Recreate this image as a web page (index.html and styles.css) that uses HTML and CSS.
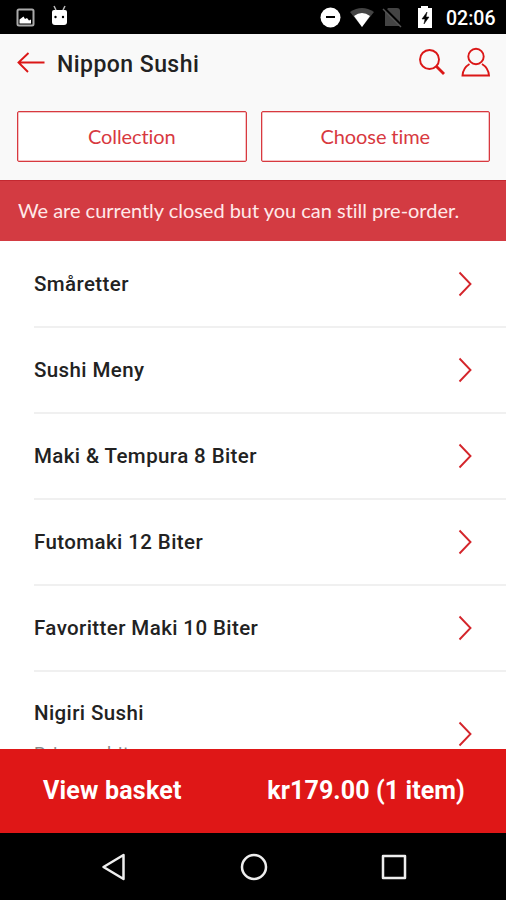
FILE: index.html
```html
<!DOCTYPE html>
<html lang="en">
<head>
<meta charset="utf-8">
<title>Nippon Sushi</title>
<link rel="stylesheet" href="styles.css">
</head>
<body>
<div class="status">
  <svg width="80" height="34" viewBox="0 0 80 34">
    <rect x="17.500" y="9.500" width="16" height="16" rx="1.500" fill="none" stroke="#aaa" stroke-width="2"/>
    <path d="M19.500 23.500v-4l2-1.500 2-1.500 1.500 2.500 2-1 2 2.500 2-1v4z" fill="#fff"/>
    <path d="M52 12q0-2 2-2h11q2 0 2 2v10q0 3-3 3h-9q-3 0-3-3z" fill="#fff"/>
    <path d="M54 6l2 4M65 6l-2 4" stroke="#bbb" stroke-width="1.500"/>
    <circle cx="55.500" cy="17" r="1.200"/><circle cx="63" cy="17" r="1.200"/>
  </svg>
  <svg class="status-right" width="116" height="34" viewBox="318 0 116 34">
    <circle cx="330.500" cy="17.500" r="10" fill="#fff"/>
    <path d="M326 17h9" stroke="#000" stroke-width="2"/>
    <path d="M350 12q12-8 24 0L362 27z" fill="#444"/>
    <path d="M354 16q8-6 16 0L362 27z" fill="#fff"/>
    <path d="M388 8h9q3 0 3 3v15h-15V12z" fill="#444"/>
    <path d="M384 8l18 18" stroke="#000" stroke-width="2.500"/>
    <path d="M383 9l18 18" stroke="#555" stroke-width="1.500"/>
    <path d="M418 8h3V6h7v2h4v20h-14z" fill="#fff"/>
    <path d="M427 12l-5 7h3l-1 5 5-7h-3z" fill="#000" stroke="#000" stroke-width=".5"/>
  </svg>
  <span class="clock">02:06</span>
</div>
<header class="header">
  <div class="titlebar">
    <svg width="30" height="30" viewBox="0 0 30 30" class="line"><path d="M28.500 14.500H2.500M12.500 5L2.500 14.500l9.500 9.500"/></svg>
    <h1>Nippon Sushi</h1>
    <svg width="78" height="36" viewBox="415 45 78 36" class="line tools">
      <circle cx="429.500" cy="59.500" r="9.500"/><path d="M436.500 66.500l7.500 7.500" stroke-width="2.800"/>
      <circle cx="476" cy="56.500" r="7.700"/><path d="M469.500 64q-6.500 4-7 11.500h26.500q-.5-7.500-7-11.500"/>
    </svg>
  </div>
  <div class="options">
    <div class="option"><span>Collection</span></div>
    <div class="option"><span>Choose time</span></div>
  </div>
</header>
<div class="banner"><span>We are currently closed but you can still pre-order.</span></div>
<main class="list">
  <div class="row"><span>Småretter</span><svg class="chev" viewBox="0 0 14 26"><path d="M1.500 1.500L12.500 13L1.500 24.500"/></svg></div>
  <div class="row"><span>Sushi Meny</span><svg class="chev" viewBox="0 0 14 26"><path d="M1.500 1.500L12.500 13L1.500 24.500"/></svg></div>
  <div class="row"><span>Maki &amp; Tempura 8 Biter</span><svg class="chev" viewBox="0 0 14 26"><path d="M1.500 1.500L12.500 13L1.500 24.500"/></svg></div>
  <div class="row"><span>Futomaki 12 Biter</span><svg class="chev" viewBox="0 0 14 26"><path d="M1.500 1.500L12.500 13L1.500 24.500"/></svg></div>
  <div class="row"><span>Favoritter Maki 10 Biter</span><svg class="chev" viewBox="0 0 14 26"><path d="M1.500 1.500L12.500 13L1.500 24.500"/></svg></div>
  <div class="row tall"><span>Nigiri Sushi<small>Pris per bit</small></span><svg class="chev" viewBox="0 0 14 26"><path d="M1.500 1.500L12.500 13L1.500 24.500"/></svg></div>
</main>
<footer class="basket"><span class="view">View basket</span><span class="total">kr179.00 (1 item)</span></footer>
<nav class="nav">
  <svg width="26" height="28" viewBox="0 0 26 28"><path d="M23.500 2v24L3.500 14z"/></svg>
  <svg width="28" height="28" viewBox="0 0 28 28"><circle cx="14" cy="14" r="12"/></svg>
  <svg width="26" height="28" viewBox="0 0 26 28"><rect x="2" y="3" width="22" height="22"/></svg>
</nav>
</body>
</html>
```
FILE: styles.css
```css
* { box-sizing: border-box; }
body {
  margin: 0;
  width: 506px;
  height: 900px;
  display: flex;
  flex-direction: column;
  overflow: hidden;
  background: #fff;
  font-family: Roboto, sans-serif;
  color: #222;
}
svg { display: block; flex: none; }
.status {
  height: 34px;
  flex: none;
  display: flex;
  align-items: center;
  background: #000;
  color: #fff;
}
.status-right { margin-left: auto; margin-right: 12px; }
.clock { width: 60px; font-size: 19.500px; font-weight: 500; line-height: 34px; padding-top: 3px; white-space: nowrap; }
.header { height: 146px; flex: none; background: #f9f9f9; }
.titlebar { height: 77px; padding: 0 13px 0 16px; display: flex; align-items: flex-start; }
.titlebar > svg:first-child { margin-top: 14px; }
.tools { margin: 11px 0 0 auto; }
.line { fill: none; stroke: #db1717; stroke-width: 1.900; }
h1 { margin: 16px 0 0 11px; font-size: 23px; line-height: 30px; font-weight: 500; letter-spacing: .45px; white-space: nowrap; }
.options { display: flex; gap: 14px; padding: 0 16px 0 17px; }
.option {
  flex: 1;
  height: 51px;
  border: 1px solid #d8393f;
  box-shadow: inset 0 0 0 .5px #e8898c;
  border-radius: 2px;
  background: #fff;
  color: #d8393f;
  font: 20px/48px Lato, sans-serif;
  letter-spacing: -.1px;
  text-align: center;
}
.banner {
  height: 61px;
  flex: none;
  padding-left: 18px;
  background: #d33b42;
  border-top: 1px solid #c32830;
  color: #ffe9e9;
  font: 20px/58px Lato, sans-serif;
  font-variant-ligatures: none;
  letter-spacing: -.02px;
  white-space: nowrap;
}
.list { height: 508px; flex: none; overflow: hidden; padding: 1px 0 0 34px; }
.row {
  height: 86px;
  display: flex;
  justify-content: space-between;
  align-items: center;
  padding: 0 34px 1px 0;
  border-bottom: 2px solid #f0f0f0;
  font-size: 20.500px;
  font-weight: 500;
  letter-spacing: .4px;
}
.chev { width: 14px; height: 26px; margin-top: 1px; fill: none; stroke: #d4252b; stroke-width: 1.900; }
.tall { height: 124px; }
.tall .chev { margin-top: 3px; }
.row small { display: block; margin-top: 18px; font-size: 18px; line-height: 22px; font-weight: 400; letter-spacing: .8px; color: #888; }
.basket {
  height: 84px;
  flex: none;
  display: flex;
  justify-content: space-between;
  padding: 0 41px 0 43px;
  background: #df1717;
  color: #fff;
  font-size: 25px;
  font-weight: 700;
  line-height: 83px;
}
.view { letter-spacing: .2px; }
.total { letter-spacing: .1px; }
.nav {
  flex: 1;
  display: flex;
  justify-content: space-between;
  align-items: center;
  padding: 0 99px 0 100px;
  background: #000;
}
.nav svg { fill: none; stroke: #eee; stroke-width: 2.500; stroke-linejoin: round; }
```
